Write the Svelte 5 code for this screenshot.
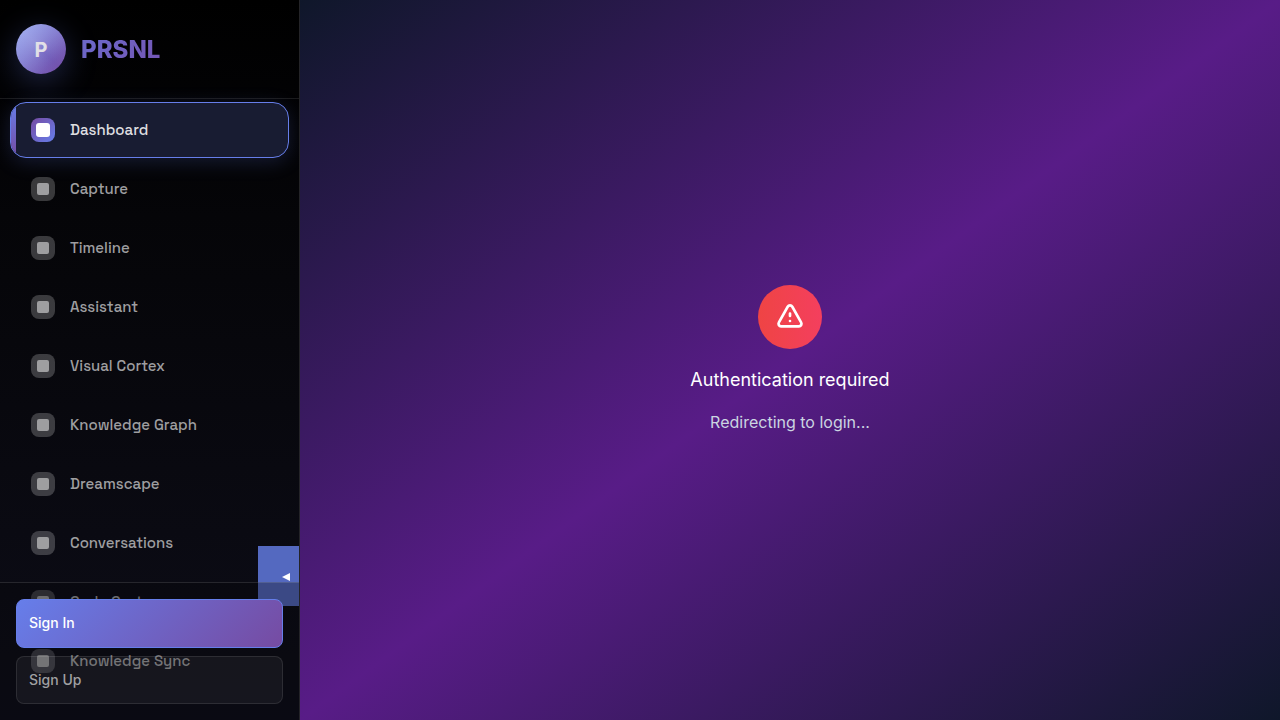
<script>
  const items = [
    'Dashboard',
    'Capture',
    'Timeline',
    'Assistant',
    'Visual Cortex',
    'Knowledge Graph',
    'Dreamscape',
    'Conversations',
    'Code Cortex',
    'Knowledge Sync'
  ];
  let active = $state('Dashboard');
</script>

<div class="layout">
  <aside class="sidebar">
    <header class="brand">
      <div class="logo"><span>P</span></div>
      <span class="name">PRSNL</span>
    </header>

    <nav>
      {#each items as item}
        <a
          href="#{item.toLowerCase().replace(' ', '-')}"
          class="item"
          class:active={active === item}
          aria-current={active === item ? 'page' : undefined}
          onclick={() => (active = item)}
        >
          <span class="icon"><span class="dot"></span></span>
          <span>{item}</span>
        </a>
      {/each}
    </nav>

    <button class="toggle" type="button" aria-label="Collapse sidebar">
      <svg width="8" height="8" viewBox="0 0 8 8" aria-hidden="true"><path d="M8 0v8L0 4z" fill="#fff" /></svg>
    </button>

    <footer class="auth">
      <button type="button" class="primary">Sign In</button>
      <button type="button" class="secondary">Sign Up</button>
    </footer>
  </aside>

  <main>
    <div class="badge">
      <svg width="32" height="32" viewBox="0 0 24 24" fill="none" stroke="#fff" stroke-width="2" stroke-linecap="round" stroke-linejoin="round" aria-hidden="true">
        <path d="M12 9.4v1.8m0 3.8h.01m-6.7 4h13.38c1.54 0 2.402-1.667 1.632-3L13.732 4.3c-.77-1.333-2.694-1.333-3.464 0L3.68 16c-.77 1.333.09 3 1.63 3z" />
      </svg>
    </div>
    <p class="title">Authentication required</p>
    <p class="note">Redirecting to login...</p>
  </main>
</div>

<style>
  :global(body) {
    background: #0a0a0a;
  }
  .layout {
    display: flex;
    height: 100vh;
    font-family: Inter, 'Liberation Sans', sans-serif;
    overflow: hidden;
    -webkit-font-smoothing: antialiased;
  }
  .layout * {
    box-sizing: border-box;
  }
  .sidebar {
    position: relative;
    display: flex;
    flex-direction: column;
    flex: 0 0 300px;
    overflow: hidden;
    border-right: 1px solid #242428;
    background: linear-gradient(180deg, #000 0%, #050508 30%, #0d0d18 100%);
  }
  .brand {
    display: flex;
    align-items: center;
    gap: 15px;
    padding: 24px 16px;
    border-bottom: 1px solid rgba(255, 255, 255, 0.1);
  }
  .logo {
    display: grid;
    place-items: center;
    width: 50px;
    height: 50px;
    border-radius: 50%;
    background:
      conic-gradient(from 315deg, rgba(255, 255, 255, 0.14), transparent 50%, rgba(255, 255, 255, 0.14)),
      linear-gradient(135deg, rgba(255, 255, 255, 0.3), transparent 75%),
      linear-gradient(135deg, #667eea, #764ba2);
    box-shadow: 0 8px 32px rgba(102, 126, 234, 0.3);
    color: #e2e0e6;
    font-size: 20px;
    font-weight: 700;
    line-height: 32px;
  }
  .logo span {
    padding-top: 2px;
  }
  .name {
    flex: 1;
    font-size: 24px;
    font-weight: 800;
    line-height: 39px;
    background: linear-gradient(135deg, #6b6acb, #7554b2 90px);
    background-clip: text;
    color: transparent;
  }
  nav {
    display: flex;
    flex-direction: column;
    flex: 1;
    gap: 3px;
    min-height: 0;
    padding: 3px 10px;
  }
  .item {
    position: relative;
    display: flex;
    align-items: center;
    flex: 0 0 56px;
    gap: 15px;
    padding: 0 20px;
    overflow: hidden;
    border: 1px solid transparent;
    border-radius: 16px;
    color: #9e9ea0;
    font-family: 'Space Grotesk', Inter, sans-serif;
    font-size: 15px;
    font-weight: 500;
    line-height: 24px;
    text-decoration: none;
  }
  .item.active {
    border-color: #667eea;
    background: #181c32;
    box-shadow: 0 4px 20px rgba(102, 126, 234, 0.2);
    color: #dedee0;
  }
  .item.active::before {
    content: '';
    position: absolute;
    inset: 0 auto 0 0;
    width: 5px;
    background: linear-gradient(180deg, #667eea, #764ba2);
  }
  .icon {
    display: grid;
    place-items: center;
    width: 24px;
    height: 24px;
    border-radius: 8px;
    background: rgba(255, 255, 255, 0.21);
  }
  .dot {
    width: 12px;
    height: 12px;
    border-radius: 2px;
    background: #9e9ea0;
  }
  .active .icon {
    background: linear-gradient(135deg, #764ba2, #667eea);
  }
  .active .dot {
    width: 14px;
    height: 14px;
    border-radius: 3px;
    background: #fff;
  }
  .toggle {
    position: absolute;
    right: -19px;
    bottom: 114px;
    display: grid;
    place-items: center;
    width: 60px;
    height: 60px;
    padding: 1px 4px 0 0;
    border: 0;
    background: #5469c0;
  }
  .auth {
    position: relative;
    display: flex;
    flex-direction: column;
    gap: 8px;
    padding: 16px;
    border-top: 1px solid rgba(255, 255, 255, 0.12);
    background: rgba(5, 5, 8, 0.32);
  }
  .auth button {
    padding: 12px;
    border: 1px solid #667eea;
    border-radius: 8px;
    font: 500 14px/22px Inter, sans-serif;
    text-align: left;
  }
  .auth .primary {
    padding-bottom: 13px;
    background: linear-gradient(135deg, #667eea, #764ba2);
    color: #fff;
  }
  .auth .secondary {
    border-color: rgba(255, 255, 255, 0.1);
    background: rgba(255, 255, 255, 0.05);
    color: #a0a0a2;
  }
  main {
    display: flex;
    flex: 1;
    flex-direction: column;
    align-items: center;
    justify-content: center;
    gap: 16px;
    background: linear-gradient(to bottom right, #0f172a, #581c87, #0f172a);
    text-align: center;
  }
  .badge {
    display: grid;
    place-items: center;
    width: 64px;
    height: 64px;
    border-radius: 50%;
    background: linear-gradient(90deg, #ef4444, #f43f5e);
  }
  p {
    margin: 0;
  }
  .title {
    color: #fff;
    font-size: 18px;
    line-height: 29px;
  }
  .note {
    color: #cbd5e1;
    font-size: 16px;
    line-height: 25px;
  }
</style>
